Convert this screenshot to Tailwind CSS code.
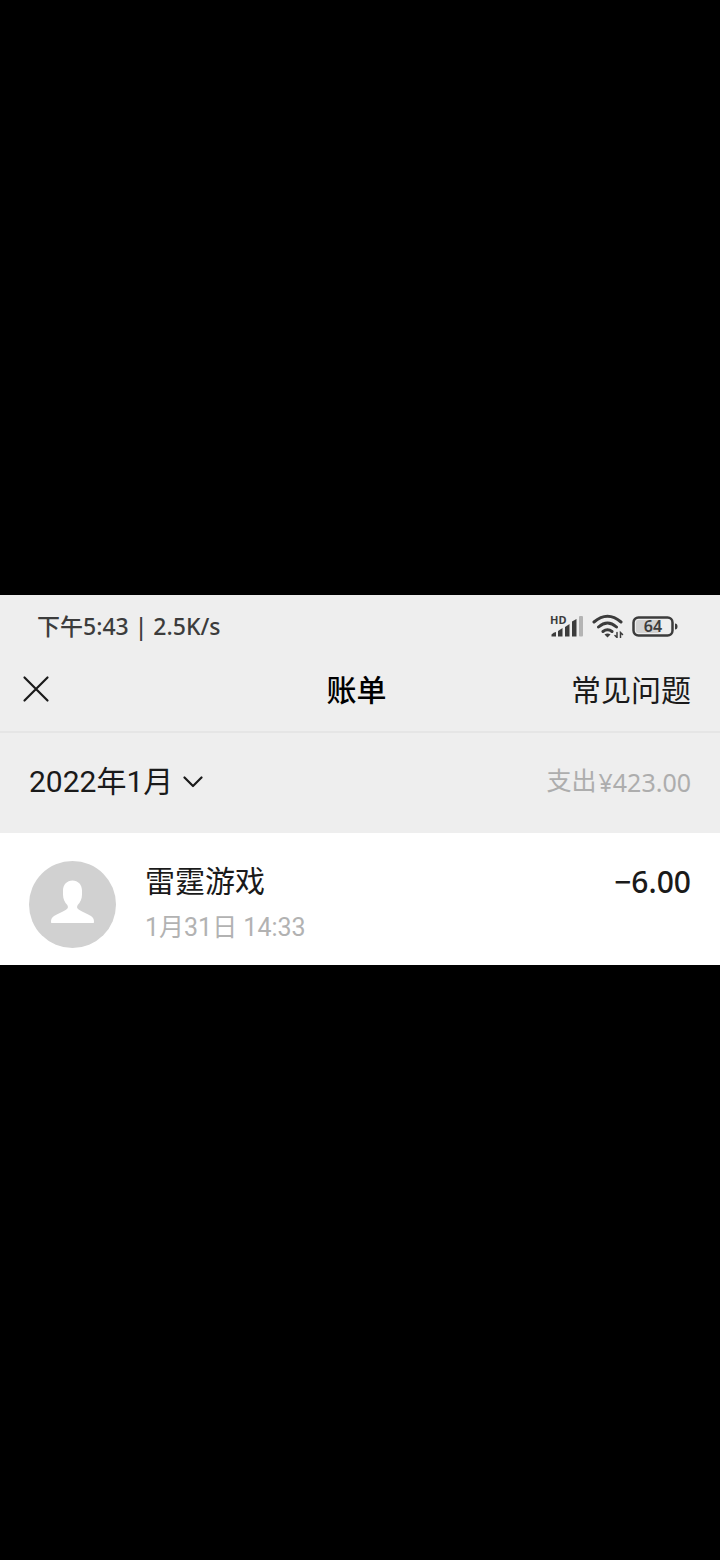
<!DOCTYPE html>
<html lang="zh-CN">
<head>
    <meta charset="UTF-8">
    <meta name="viewport" content="width=device-width, initial-scale=1.0">
    <title>账单</title>
    <script src="https://cdn.jsdelivr.net/npm/@tailwindcss/browser@4"></script>
</head>
<body class="flex min-h-screen items-center bg-black font-['Roboto','Noto_Sans_CJK_SC',sans-serif] text-[#1a1a1a]">
    <div class="w-full bg-[#eeeeee]">
        <!-- Status bar -->
        <div class="flex h-[62px] items-center justify-between pr-[42px] pl-[37px] text-[#3c3c3c]">
            <span class="font-['Noto_Sans','Noto_Sans_CJK_SC',sans-serif] text-[23px] leading-8 font-medium">下午5:43 | 2.5K/s</span>
            <div class="flex items-center gap-2">
                <!-- Signal -->
                <div class="relative h-6 w-[34px]">
                    <span class="absolute top-0 left-0 font-['Noto_Sans',sans-serif] text-[11px] leading-[12px] font-bold">HD</span>
                    <svg class="h-6 w-[34px]" viewBox="0 0 34 24" fill="currentColor">
                        <path d="M1.500 22.500v-2q2-2.500 4.500-2.500v4.500zM8 22.500v-5.500l4.500-3v8.500zM15 22.500v-9.500l4.500-3v12.500zM22 22.500v-15l4.500-2.500v17.500z"/>
                        <rect x="29" y="2" width="4" height="20.500" rx="1" fill="#b4b4b4"/>
                    </svg>
                </div>
                <!-- Wifi -->
                <svg class="h-6 w-8" viewBox="0 0 32 24" fill="none" stroke="currentColor" stroke-width="3" stroke-linecap="round">
                    <path d="M2 8q13.500-11.500 27 0M6.500 13q9-8 18 0M11 17.500q4.500-3.500 9 0"/>
                    <path d="M12.500 20.500q3-2 6 0L15.500 23.500z" fill="currentColor" stroke="none"/>
                    <path d="M25 18.500v5l-2-2M28.500 23.500v-5l2 2" stroke-width="1.500"/>
                </svg>
                <!-- Battery -->
                <div class="relative h-[21px] w-[46px]">
                    <svg class="h-[21px] w-[46px]" viewBox="0 0 46 21">
                        <rect x="4" y="4" width="24" height="13" rx="2" fill="#d2d2d2"/>
                        <rect x="1.500" y="1.500" width="39" height="18" rx="5" fill="none" stroke="currentColor" stroke-width="2.500"/>
                        <path d="M43 7.500q2.500 0 2.500 3t-2.500 3z" fill="currentColor"/>
                    </svg>
                    <span class="absolute inset-y-0 left-0 w-[42px] text-center font-['Noto_Sans',sans-serif] text-base leading-[21px] font-semibold">64</span>
                </div>
            </div>
        </div>

        <!-- Header -->
        <header class="grid h-[76px] grid-cols-[1fr_auto_1fr] items-center border-b-2 border-[#e5e5e5] pt-px pb-2 pr-[29px] pl-[22px]">
            <button type="button" aria-label="关闭" class="justify-self-start pb-1">
                <svg class="h-7 w-7" viewBox="0 0 28 28" fill="none" stroke="currentColor" stroke-width="2.200" stroke-linecap="round">
                    <path d="M2.500 2.500l23 23M25.500 2.500l-23 23"/>
                </svg>
            </button>
            <h1 class="text-[30px] leading-10 font-medium text-black">账单</h1>
            <a href="#" class="justify-self-end text-[30px] leading-10">常见问题</a>
        </header>

        <!-- Month -->
        <div class="flex h-[100px] items-center justify-between px-[29px] pb-[2px]">
            <button type="button" class="flex items-center gap-[10px] text-[30px] leading-10">
                2022年1月
                <svg class="h-3 w-5" viewBox="0 0 20 12" fill="none" stroke="currentColor" stroke-width="2.200" stroke-linecap="round" stroke-linejoin="round">
                    <path d="M1.500 1.500l8.500 8.500 8.500-8.500"/>
                </svg>
            </button>
            <p class="flex items-center gap-[2px] text-[25px] leading-10 text-[#adadad]">
                <span>支出</span>
                <span class="font-['Noto_Sans',sans-serif]">¥423.00</span>
            </p>
        </div>

        <!-- Bills -->
        <ul class="bg-white">
            <li class="flex h-[132px] items-center gap-[29px] px-[29px] pt-5 pb-[10px]">
                <svg class="h-[87px] w-[87px] shrink-0" viewBox="0 0 87 87">
                    <circle cx="43.500" cy="43.500" r="43.500" fill="#d1d1d1"/>
                    <path d="M43.500 19.500c-5.500 0-9.500 4.300-9.500 10v4c0 4.500 1.800 8 4.300 10.500 1.200 2 .7 3.500-1.300 4.700-4 2.300-8.500 4-12 6.300-2.200 1.500-3 3-3 6 0 .7.300 1 1 1h41c.7 0 1-.3 1-1 0-3-.8-4.500-3-6-3.500-2.300-8-4-12-6.300-2-1.200-2.500-2.700-1.300-4.700 2.500-2.500 4.300-6 4.300-10.500v-4c0-5.700-4-10-9.500-10z" fill="#fff"/>
                </svg>
                <div class="flex-1 pt-[2px]">
                    <div class="flex items-center justify-between text-[30px] leading-[46px]">
                        <h2>雷霆游戏</h2>
                        <span class="font-['Noto_Sans',sans-serif] font-medium">−6.00</span>
                    </div>
                    <p class="text-[25px] leading-[46px] text-[#b2b2b2]">1月31日 14:33</p>
                </div>
            </li>
        </ul>
    </div>
</body>
</html>
